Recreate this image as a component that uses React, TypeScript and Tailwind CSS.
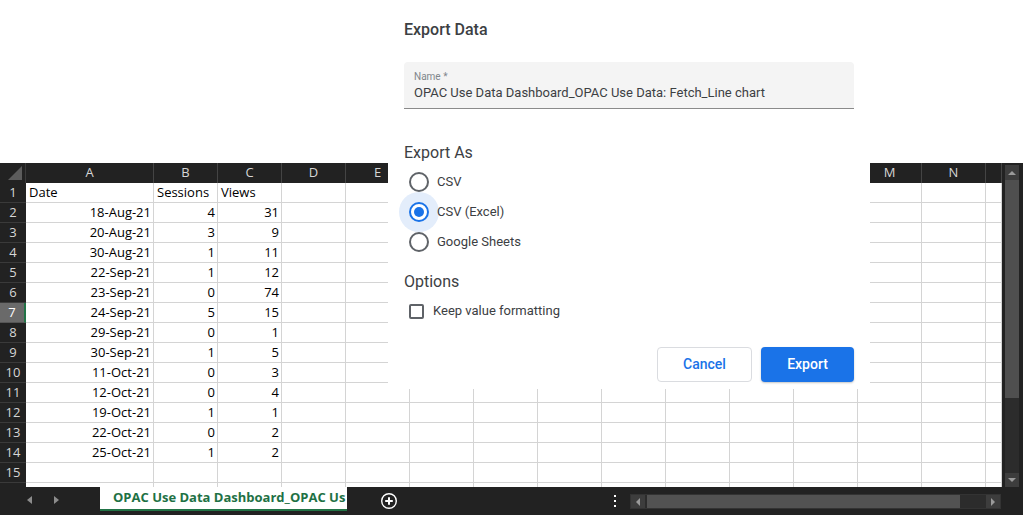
import React from 'react';

const cols = [
  { l: 'A', w: 'w-[128px]' },
  { l: 'B', w: 'w-[64px]' },
  { l: 'C', w: 'w-[64px]' },
  { l: 'D', w: 'w-[64px]' },
  { l: 'E', w: 'w-[64px]' },
  { l: 'F', w: 'w-[64px]' },
  { l: 'G', w: 'w-[64px]' },
  { l: 'H', w: 'w-[64px]' },
  { l: 'I', w: 'w-[64px]' },
  { l: 'J', w: 'w-[64px]' },
  { l: 'K', w: 'w-[64px]' },
  { l: 'L', w: 'w-[64px]' },
  { l: 'M', w: 'w-[64px]' },
  { l: 'N', w: 'w-[64px]' },
  { l: '', w: 'w-[16px]' },
];

// date, sessions, views
const data: string[][] = [
  ['Date', 'Sessions', 'Views'],
  ['18-Aug-21', '4', '31'],
  ['20-Aug-21', '3', '9'],
  ['30-Aug-21', '1', '11'],
  ['22-Sep-21', '1', '12'],
  ['23-Sep-21', '0', '74'],
  ['24-Sep-21', '5', '15'],
  ['29-Sep-21', '0', '1'],
  ['30-Sep-21', '1', '5'],
  ['11-Oct-21', '0', '3'],
  ['12-Oct-21', '0', '4'],
  ['19-Oct-21', '1', '1'],
  ['22-Oct-21', '0', '2'],
  ['25-Oct-21', '1', '2'],
  [],
  [],
];

const Sheet = () => (
  <div className="flex h-[324px] bg-[#222]">
    <div className="w-[1002px] flex flex-col overflow-hidden bg-white">
      {/* column headers */}
      <div className="flex h-[20px] shrink-0 bg-[#222]">
        <div className="w-[26px] h-full flex items-end justify-end pr-[3px] pb-[3px] border-r border-[#3a3a3a]">
          <div className="w-0 h-0 border-l-[14px] border-l-transparent border-b-[14px] border-b-[#5c5c5c]" />
        </div>
        {cols.map((c, i) => (
          <div
            key={i}
            className={`${c.w} h-full shrink-0 flex items-center justify-center text-[13px] text-[#d6d6d6] border-r border-[#444]`}
          >
            {c.l}
          </div>
        ))}
      </div>
      {data.map((row, r) => (
        <div key={r} className="flex h-[20px] shrink-0">
          <div
            className={`w-[26px] h-full shrink-0 flex items-center justify-center pt-[1px] text-[13px] border-b ${
              r === 6
                ? 'bg-[#6a6a6a] text-white border-[#555] border-r-2 border-r-[#217346]'
                : 'bg-[#222] text-[#d6d6d6] border-[#3a3a3a]'
            }`}
          >
            {r < 15 ? r + 1 : ''}
          </div>
          {cols.map((c, i) => (
            <div
              key={i}
              className={`${c.w} h-full shrink-0 flex items-center pt-[1px] overflow-hidden whitespace-nowrap text-[13px] text-black border-r border-b border-[#d4d4d4] ${
                r === 0 ? 'justify-start pl-[3px]' : 'justify-end pr-[2px]'
              }`}
            >
              {i < 3 ? row[i] : ''}
            </div>
          ))}
        </div>
      ))}
    </div>
    <div className="w-[3px]" />
    <div className="w-[14px] flex flex-col pt-[2px]">
      <div className="h-[15px] bg-[#3d3d3d] flex items-center justify-center">
        <div className="w-0 h-0 border-l-[4px] border-l-transparent border-r-[4px] border-r-transparent border-b-[4px] border-b-[#9a9a9a]" />
      </div>
      <div className="h-[218px] bg-[#4f4f4f]" />
      <div className="flex-1 bg-[#2c2c2c]" />
      <div className="h-[14px] bg-[#3d3d3d] flex items-center justify-center">
        <div className="w-0 h-0 border-l-[4px] border-l-transparent border-r-[4px] border-r-transparent border-t-[4px] border-t-[#9a9a9a]" />
      </div>
    </div>
  </div>
);

const BottomBar = () => (
  <div className="flex h-[28px] bg-[#222]">
    <div className="w-[100px] flex items-start pt-[9px]">
      <div className="ml-[27px] w-0 h-0 border-t-[4px] border-t-transparent border-b-[4px] border-b-transparent border-r-[5px] border-r-[#8c8c8c]" />
      <div className="ml-[22px] w-0 h-0 border-t-[4px] border-t-transparent border-b-[4px] border-b-transparent border-l-[5px] border-l-[#8c8c8c]" />
    </div>
    <div className="w-[247px] h-[24px] bg-white border-b-2 border-[#217346] flex items-center pl-[13px] overflow-hidden whitespace-nowrap">
      <span className="text-[13px] font-bold text-[#1e7145]">OPAC Use Data Dashboard_OPAC Us</span>
    </div>
    <div className="w-[33px]" />
    <div className="pt-[5px]">
      <svg width="18" height="18" viewBox="0 0 18 18">
        <circle cx="9" cy="9" r="7.3" fill="none" stroke="#fff" strokeWidth="1.4" />
        <path d="M9 5.2v7.6M5.2 9h7.6" stroke="#fff" strokeWidth="2" />
      </svg>
    </div>
    <div className="w-[216px]" />
    <div className="flex flex-col gap-[3px] pt-[8px]">
      <div className="w-[2px] h-[2px] bg-white" />
      <div className="w-[2px] h-[2px] bg-white" />
      <div className="w-[2px] h-[2px] bg-white" />
    </div>
    <div className="w-[14px]" />
    <div className="mt-[7px] w-[371px] h-[15px] flex bg-[#2c2c2c] border border-[#333]">
      <div className="w-[14px] bg-[#3d3d3d] flex items-center justify-center">
        <div className="w-0 h-0 border-t-[4px] border-t-transparent border-b-[4px] border-b-transparent border-r-[4px] border-r-[#9a9a9a]" />
      </div>
      <div className="w-[2px]" />
      <div className="w-[313px] bg-[#525252]" />
      <div className="flex-1" />
      <div className="w-[14px] bg-[#3d3d3d] flex items-center justify-center">
        <div className="w-0 h-0 border-t-[4px] border-t-transparent border-b-[4px] border-b-transparent border-l-[4px] border-l-[#9a9a9a]" />
      </div>
    </div>
  </div>
);

const Radio = ({ label, checked }: { label: string; checked?: boolean }) => (
  <div className="flex items-center h-[30px]">
    <div className="w-[30px] flex items-center justify-center">
      <div
        className={`w-[20px] h-[20px] rounded-full border-2 flex items-center justify-center ${
          checked ? 'border-[#1a73e8] bg-white ring-[10px] ring-[#e3edfb]' : 'border-[#5f6368]'
        }`}
      >
        {checked && <div className="w-[10px] h-[10px] rounded-full bg-[#1a73e8]" />}
      </div>
    </div>
    <span className="ml-[3px] text-[13px] text-[#3c4043]">{label}</span>
  </div>
);

const ExportDialog = () => (
  <div className="absolute left-[388px] top-0 w-[482px] h-[389px] bg-white z-10 px-4 flex flex-col font-['Roboto',sans-serif]">
    <div className="mt-[18px] leading-6 text-[16px] font-medium text-[#3c4043]">Export Data</div>
    <div className="mt-5 h-[47px] bg-[#f4f4f4] rounded-t border-b border-[#8a8a8a] px-[10px] pt-[8px]">
      <div className="text-[10px] leading-[14px] text-[#80868b]">Name *</div>
      <div className="text-[13px] leading-[17px] text-[#3c4043]">
        OPAC Use Data Dashboard_OPAC Use Data: Fetch_Line chart
      </div>
    </div>
    <div className="mt-[32px] leading-6 text-[16px] text-[#3c4043]">Export As</div>
    <div className="mt-[2px] flex flex-col">
      <Radio label="CSV" />
      <Radio label="CSV (Excel)" checked />
      <Radio label="Google Sheets" />
    </div>
    <div className="mt-[13px] leading-6 text-[16px] text-[#3c4043]">Options</div>
    <div className="mt-[5px] h-[24px] flex items-center">
      <div className="ml-[5px] w-[15px] h-[15px] border-2 border-[#5f6368] rounded-[2px]" />
      <span className="ml-[9px] text-[13px] text-[#3c4043]">Keep value formatting</span>
    </div>
    <div className="mt-[24px] flex justify-end gap-[9px]">
      <button className="w-[95px] h-[35px] rounded border border-[#dadce0] bg-white text-[14px] font-medium text-[#1a73e8]">
        Cancel
      </button>
      <button className="w-[93px] h-[35px] rounded bg-[#1a73e8] text-[14px] font-medium text-white shadow-[0_1px_2px_rgba(60,64,67,0.3)]">
        Export
      </button>
    </div>
  </div>
);

export default function App() {
  return (
    <div className="relative w-[1023px] h-[515px] overflow-hidden bg-white font-['Open_Sans',sans-serif]">
      <div className="h-[163px]" />
      <Sheet />
      <BottomBar />
      <ExportDialog />
    </div>
  );
}
